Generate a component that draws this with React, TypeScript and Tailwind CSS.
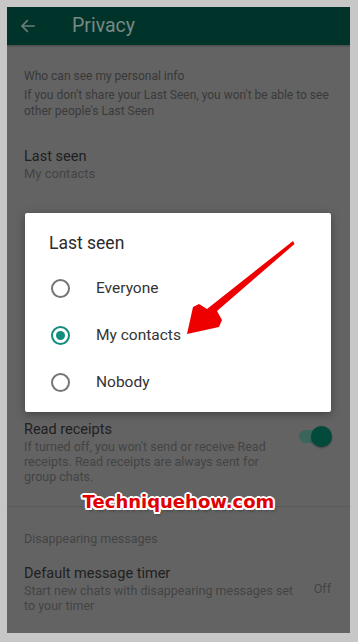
import React from 'react';

const font = { fontFamily: 'Roboto, "Noto Sans", sans-serif' };

const Radio = ({ checked }: { checked?: boolean }) => (
  <span
    className={`flex h-[19px] w-[19px] items-center justify-center rounded-full border-2 ${
      checked ? 'border-[#128c7e]' : 'border-[#757575]'
    }`}
  >
    {checked && <span className="h-[9px] w-[9px] rounded-full bg-[#128c7e]" />}
  </span>
);

const options = [
  { label: 'Everyone', checked: false },
  { label: 'My contacts', checked: true },
  { label: 'Nobody', checked: false },
];

export default function App() {
  return (
    <div className="min-h-[642px] w-[358px] bg-[#c7c7c7] px-[7px] pt-[7px]" style={font}>
      <div className="relative h-[626px] w-[343px] overflow-hidden bg-[#636363]">
        {/* app bar */}
        <div className="flex h-[38px] items-center bg-[#00342b] shadow-[0_1px_2px_rgba(0,0,0,0.3)]">
          <svg className="ml-[12px] h-[18px] w-[18px]" viewBox="0 0 24 24" fill="none">
            <path d="M20 12H5M11 5l-7 7 7 7" stroke="#6a7c77" strokeWidth="2.2" strokeLinecap="square" />
          </svg>
          <span className="ml-[35px] text-[19.5px] leading-none text-[#788883]">Privacy</span>
        </div>

        <div className="px-[17px]">
          <div className="pt-[23px] text-[12px] leading-[16px] text-[#383838]">Who can see my personal info</div>
          <div className="mt-[3px] text-[12px] leading-[16px] text-[#3a3a3a]">
            If you don't share your Last Seen, you won't be able to see other people's Last Seen
          </div>

          <div className="mt-[29px] text-[14.5px] leading-[18px] text-[#202020]">Last seen</div>
          <div className="text-[13px] leading-[16px] text-[#434343]">My contacts</div>

          {/* rows hidden behind the dialog */}
          <div className="h-[239px]" />

          <div className="flex items-start justify-between">
            <div className="w-[245px]">
              <div className="text-[14.5px] leading-[18px] text-[#202020]">Read receipts</div>
              <div className="text-[12.5px] leading-[15px] text-[#434343]">
                If turned off, you won't send or receive Read receipts. Read receipts are always sent for group chats.
              </div>
            </div>
            <div className="relative mr-[1px] mt-[5px] h-[21px] w-[34px]">
              <div className="absolute left-[1px] top-[4px] h-[13px] w-[30px] rounded-full bg-[#3a655b]" />
              <div className="absolute right-0 top-0 h-[21px] w-[21px] rounded-full bg-[#014a3c] shadow-[0_1px_2px_rgba(0,0,0,0.35)]" />
            </div>
          </div>
        </div>

        <div className="mt-[22px] h-px bg-[#5a5a5a]" />

        <div className="px-[17px]">
          <div className="mt-[24px] text-[12.5px] leading-[16px] text-[#434343]">Disappearing messages</div>
          <div className="mt-[18px] flex items-center justify-between">
            <div className="w-[270px]">
              <div className="text-[14.5px] leading-[18px] text-[#202020]">Default message timer</div>
              <div className="text-[12.5px] leading-[15px] text-[#434343]">
                Start new chats with disappearing messages set to your timer
              </div>
            </div>
            <span className="mr-[2px] text-[12.5px] text-[#434343]">Off</span>
          </div>
        </div>

        {/* dialog */}
        <div className="absolute left-[18px] top-[206px] h-[199px] w-[306px] rounded-[2px] bg-white shadow-[0_2px_8px_rgba(0,0,0,0.35)]">
          <div className="pl-[24px] pt-[19px] text-[17.5px] leading-[22px] text-[#2b2b2b]">Last seen</div>
          <div className="mt-[11px] flex flex-col">
            {options.map((o) => (
              <div key={o.label} className="flex h-[47px] items-center">
                <span className="ml-[26px]">
                  <Radio checked={o.checked} />
                </span>
                <span className="ml-[26px] text-[15.5px] text-[#333333]">{o.label}</span>
              </div>
            ))}
          </div>
        </div>

        {/* red arrow annotation */}
        <svg className="pointer-events-none absolute left-0 top-0" width="343" height="626" viewBox="0 0 343 626">
          <path
            d="M286 234 L287.5 237 L210 304 L215 313 L212 320 L180 327 L186 300 L192 297 L200 302 Z"
            fill="#e00"
          />
        </svg>

        {/* watermark */}
        <div className="absolute left-0 right-0 top-[481px] text-center">
          <span
            className="text-[18px] font-bold text-[#e00000]"
            style={{
              fontFamily: '"DejaVu Sans", Verdana, sans-serif',
              textShadow:
                '2px 0 0 #fff, -2px 0 0 #fff, 0 2px 0 #fff, 0 -2px 0 #fff, 1.5px 1.5px 0 #fff, -1.5px -1.5px 0 #fff, 1.5px -1.5px 0 #fff, -1.5px 1.5px 0 #fff, 2px 3px 3px rgba(0,0,0,0.4)',
            }}
          >
            Techniquehow.com
          </span>
        </div>
      </div>
      <div className="h-[9px]" />
    </div>
  );
}
